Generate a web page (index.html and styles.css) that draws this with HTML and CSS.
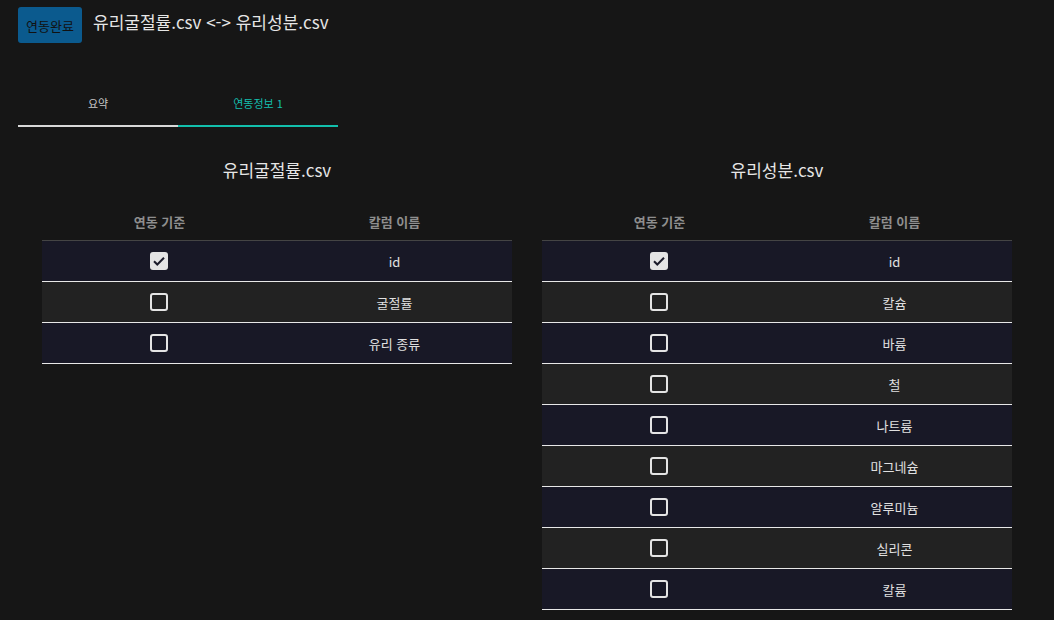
FILE: index.html
```html
<!DOCTYPE html>
<html lang="ko">
<head>
<meta charset="utf-8">
<link rel="stylesheet" href="styles.css">
</head>
<body>
<div class="page">
  <header class="header">
    <button class="done-btn">연동완료</button>
    <h1 class="title">유리굴절률.csv &lt;-&gt; 유리성분.csv</h1>
  </header>
  <nav class="tabs">
    <div class="tab">요약</div>
    <div class="tab active">연동정보 1</div>
  </nav>
  <div class="panels">
    <section class="panel">
      <h2 class="panel-title">유리굴절률.csv</h2>
      <div class="table">
        <div class="thead"><div>연동 기준</div><div>칼럼 이름</div></div>
        <div class="row odd"><div><span class="cb checked"><svg viewBox="0 0 18 18" width="18" height="18"><path d="M4 9.2l3.3 3.3L14 5.8" fill="none" stroke="#1b1b2a" stroke-width="2"/></svg></span></div><div>id</div></div>
        <div class="row even"><div><span class="cb"></span></div><div>굴절률</div></div>
        <div class="row odd"><div><span class="cb"></span></div><div>유리 종류</div></div>
      </div>
    </section>
    <section class="panel">
      <h2 class="panel-title">유리성분.csv</h2>
      <div class="table">
        <div class="thead"><div>연동 기준</div><div>칼럼 이름</div></div>
        <div class="row odd"><div><span class="cb checked"><svg viewBox="0 0 18 18" width="18" height="18"><path d="M4 9.2l3.3 3.3L14 5.8" fill="none" stroke="#1b1b2a" stroke-width="2"/></svg></span></div><div>id</div></div>
        <div class="row even"><div><span class="cb"></span></div><div>칼슘</div></div>
        <div class="row odd"><div><span class="cb"></span></div><div>바륨</div></div>
        <div class="row even"><div><span class="cb"></span></div><div>철</div></div>
        <div class="row odd"><div><span class="cb"></span></div><div>나트륨</div></div>
        <div class="row even"><div><span class="cb"></span></div><div>마그네슘</div></div>
        <div class="row odd"><div><span class="cb"></span></div><div>알루미늄</div></div>
        <div class="row even"><div><span class="cb"></span></div><div>실리콘</div></div>
        <div class="row odd"><div><span class="cb"></span></div><div>칼륨</div></div>
      </div>
    </section>
  </div>
</div>
</body>
</html>
```

FILE: styles.css
```css
* { box-sizing: border-box; }
html, body { margin: 0; padding: 0; background: #161616; }
body {
  font-family: "Noto Sans", "Noto Sans CJK KR", sans-serif;
  color: #e0e0e0;
  overflow: hidden;
  height: 620px;
}
.page { padding: 7px 18px 0 18px; }
.header { display: flex; align-items: center; height: 36px; }
.done-btn {
  width: 64px; height: 36px;
  background: #0b5a8e;
  border: none; border-radius: 3px;
  color: #111;
  font-family: "Noto Sans CJK KR", sans-serif;
  font-size: 13px;
  padding: 0;
}
.title {
  margin: 0 0 0 11px;
  font-family: "Noto Sans CJK KR", sans-serif;
  font-weight: 400;
  font-size: 17px;
  color: #e6e6e6;
  position: relative; top: -4px;
}
.tabs { display: flex; margin-top: 40px; width: 320px; }
.tab {
  width: 160px; height: 44px;
  display: flex; align-items: center; justify-content: center;
  font-family: "Noto Sans CJK KR", sans-serif;
  font-size: 11px; color: #c8c8c8;
  border-bottom: 2px solid #d8d8d8;
  padding-bottom: 2px;
}
.tab.active { color: #14bfae; border-bottom-color: #12bfac; }
.panels {
  display: grid;
  grid-template-columns: 470px 470px;
  column-gap: 30px;
  padding: 0 24px;
  margin-top: 31px;
}
.panel-title {
  margin: 0;
  text-align: center;
  font-family: "Noto Sans CJK KR", sans-serif;
  font-weight: 400;
  font-size: 17px;
  line-height: 24px;
  color: #e6e6e6;
}
.table { margin-top: 24px; }
.thead, .row { display: grid; grid-template-columns: 1fr 1fr; }
.thead > div, .row > div { display: flex; align-items: center; justify-content: center; }
.thead {
  height: 35px;
  border-bottom: 1px solid #444;
  font-family: "Noto Sans CJK KR", sans-serif;
  font-size: 13px; font-weight: 700;
  color: #8e8e8e;
  padding-bottom: 4px;
}
.row {
  height: 41px;
  border-bottom: 1px solid #e8e8e8;
  font-family: "Noto Sans CJK KR", sans-serif;
  font-size: 13px;
  color: #e0e0e0;
}
.row.odd { background: #181826; }
.row.even { background: #222222; }
.cb {
  width: 18px; height: 18px;
  border: 2px solid #e4e4e4;
  border-radius: 3px;
  display: block;
  margin-left: -2px;
}
.cb.checked {
  border: none;
  background: #e4e4e4;
}
.cb svg { display: block; }
```
